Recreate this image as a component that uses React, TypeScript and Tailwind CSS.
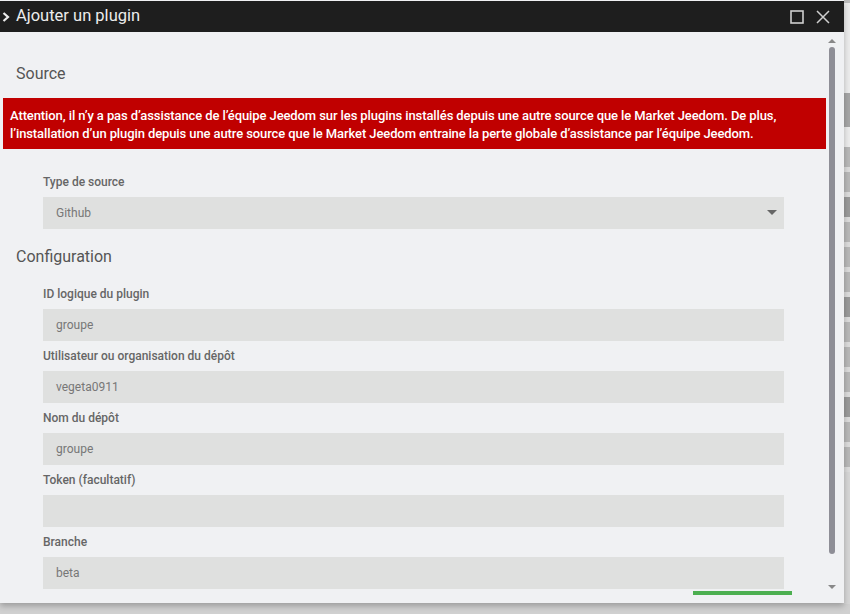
import React from "react";

const fields = [
  { label: "ID logique du plugin", value: "groupe" },
  { label: "Utilisateur ou organisation du dépôt", value: "vegeta0911" },
  { label: "Nom du dépôt", value: "groupe" },
  { label: "Token (facultatif)", value: "" },
  { label: "Branche", value: "beta" },
];

function Field({ label, value }: { label: string; value: string }) {
  return (
    <div className="flex flex-col">
      <div className="h-[31px] flex items-center pt-[1px] text-[12px] font-medium text-[#666]">{label}</div>
      <div className="h-[32px] bg-[#dfe0df] flex items-center pl-[13px] text-[12px] text-[#777]">{value}</div>
    </div>
  );
}

export default function App() {
  return (
    <div className="w-[850px] h-[614px] bg-[#d0d0d0] overflow-hidden relative" style={{ fontFamily: "Roboto, 'Noto Sans', sans-serif" }}>
      <div className="flex flex-row h-[604px]">
        <div className="w-[844px] h-[603px] flex flex-col bg-[#f0f1f3] shadow-[0_3px_6px_rgba(0,0,0,0.25)] relative z-10">
          <div className="h-[31px] mt-[1px] bg-[#1e1e1e] flex items-center">
            <svg width="10" height="12" viewBox="0 0 10 12" className="ml-[1px]">
              <path d="M2.5 2 L7 6 L2.5 10" stroke="#ececec" strokeWidth="2.2" fill="none" />
            </svg>
            <span className="ml-[5px] text-[16.5px] text-[#ececec]">Ajouter un plugin</span>
            <div className="flex-1" />
            <svg width="14" height="14" viewBox="0 0 14 14" className="mr-[12px]">
              <rect x="1" y="1" width="12" height="12" stroke="#cfcfcf" strokeWidth="1.6" fill="none" />
            </svg>
            <svg width="14" height="14" viewBox="0 0 14 14" className="mr-[14px]">
              <path d="M1 1 L13 13 M13 1 L1 13" stroke="#cfcfcf" strokeWidth="1.5" />
            </svg>
          </div>
          <div className="flex flex-row flex-1 relative">
            <div className="flex-1 flex flex-col">
              <div className="pl-[16px] pt-[32px] text-[16px] text-[#555] leading-[20px]">Source</div>
              <div className="ml-[3px] mt-[14px] h-[51px] bg-[#c00000] text-white text-[13px] font-medium leading-[18px] px-[7px] pt-[9px] tracking-[-0.1px] whitespace-nowrap">
                Attention, il n’y a pas d’assistance de l’équipe Jeedom sur les plugins installés depuis une autre source que le Market Jeedom. De plus,
                <br />
                l’installation d’un plugin depuis une autre source que le Market Jeedom entraine la perte globale d’assistance par l’équipe Jeedom.
              </div>
              <div className="ml-[43px] w-[741px] mt-[17px] flex flex-col">
                <div className="h-[31px] flex items-center pt-[1px] text-[12px] font-medium text-[#666]">Type de source</div>
                <div className="h-[32px] bg-[#dfe0df] flex items-center pl-[13px] pr-[7px] text-[12px] text-[#777]">
                  <span className="flex-1">Github</span>
                  <svg width="10" height="6" viewBox="0 0 10 6">
                    <path d="M0 0 L10 0 L5 5 Z" fill="#666" />
                  </svg>
                </div>
              </div>
              <div className="pl-[16px] mt-[18px] text-[16px] text-[#555] leading-[20px]">Configuration</div>
              <div className="ml-[43px] w-[741px] mt-[20px] flex flex-col">
                {fields.map((f, i) => (
                  <div key={i} className={i === 0 ? "-mt-[9px]" : "-mt-[1px]"}>
                    <Field label={f.label} value={f.value} />
                  </div>
                ))}
              </div>
              <div className="ml-[693px] mt-[2px] w-[99px] h-[4px] bg-[#4caf50]" />
            </div>
            <div className="w-[18px] flex flex-col items-center pt-[6px] pr-[6px]">
              <svg width="8" height="5" viewBox="0 0 8 5">
                <path d="M0 5 L4 1 L8 5 Z" fill="#888" />
              </svg>
              <div className="mt-[4px] w-[6px] h-[507px] rounded-[3px] bg-[#8e8e96]" />
              <div className="flex-1" />
              <svg width="8" height="5" viewBox="0 0 8 5" className="mb-[13px]">
                <path d="M0 0 L8 0 L4 4 Z" fill="#888" />
              </svg>
            </div>
          </div>
        </div>
        <div className="w-[6px] flex flex-col">
          <div className="h-[3px] bg-[#bdbdbd]" />
          <div className="h-[90px] bg-[#ececec]" />
          <div className="h-[34px] bg-[#a6a6a6]" />
          <div className="h-[20px] bg-[#ececec]" />
          {Array.from({ length: 13 }).map((_, i) => (
            <div key={i} className="flex flex-col">
              <div className={"h-[20px] " + (i % 4 === 2 ? "bg-[#9a9a9a]" : "bg-[#b8b8b8]")} />
              <div className="h-[5px] bg-[#dcdcdc]" />
            </div>
          ))}
          <div className="flex-1 bg-[#d6d6d6]" />
        </div>
      </div>
    </div>
  );
}
